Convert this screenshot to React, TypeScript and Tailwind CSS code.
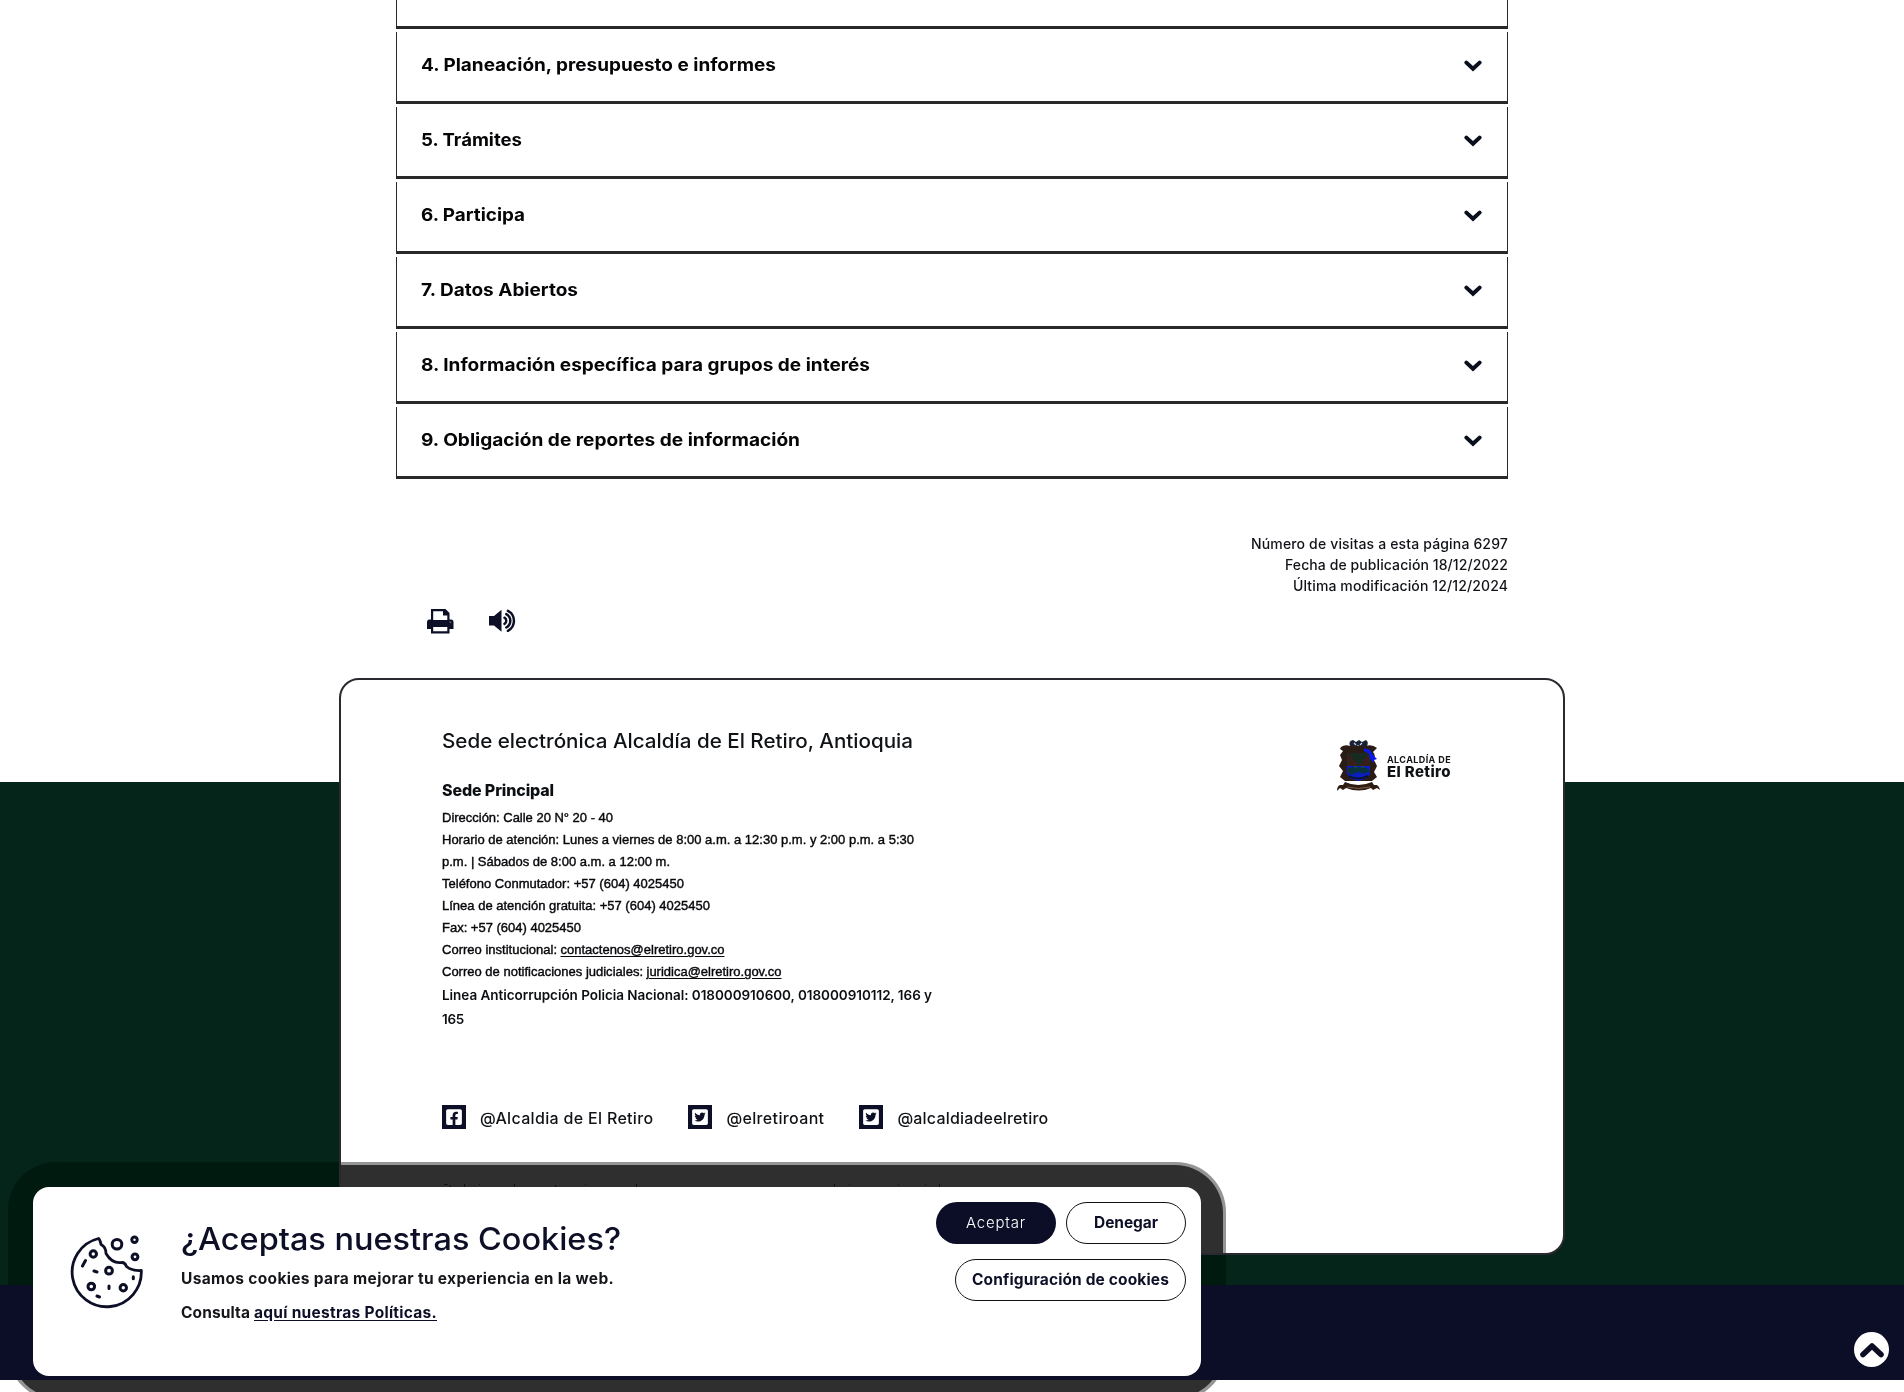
import { useLayoutEffect, useRef, type ReactNode } from "react";
import { FaFacebookSquare, FaTwitterSquare } from "react-icons/fa";

/** Single line of text fitted to a width by tracking, or by widening the glyphs when `stretch` is set. */
function Fit({ w, stretch = false, className = "", children }: { w: number; stretch?: boolean; className?: string; children: ReactNode }) {
  const ref = useRef<HTMLSpanElement>(null);
  useLayoutEffect(() => {
    const el = ref.current;
    if (!el) return;
    el.style.letterSpacing = "0px";
    el.style.transform = "none";
    const natural = el.getBoundingClientRect().width;
    if (stretch) {
      el.style.transform = `scaleX(${w / natural})`;
      return;
    }
    const count = (el.textContent ?? "").length;
    el.style.letterSpacing = `${(w - natural) / count}px`;
  }, [w, stretch]);
  return (
    <span ref={ref} className={`inline-block whitespace-nowrap ${stretch ? "origin-left" : ""} ${className}`}>
      {children}
    </span>
  );
}

const sections: [string, number][] = [
  ["4. Planeación, presupuesto e informes", 355],
  ["5. Trámites", 101],
  ["6. Participa", 104],
  ["7. Datos Abiertos", 157],
  ["8. Información específica para grupos de interés", 449],
  ["9. Obligación de reportes de información", 379],
];

const contact: [string, number, string?, number?][] = [
  ["Dirección: Calle 20 N° 20 - 40", 171],
  ["Horario de atención: Lunes a viernes de 8:00 a.m. a 12:30 p.m. y 2:00 p.m. a 5:30", 472],
  ["p.m. | Sábados de 8:00 a.m. a 12:00 m.", 228],
  ["Teléfono Conmutador: +57 (604) 4025450", 242],
  ["Línea de atención gratuita: +57 (604) 4025450", 268],
  ["Fax: +57 (604) 4025450", 139],
  ["Correo institucional:", 115, "contactenos@elretiro.gov.co", 164],
  ["Correo de notificaciones judiciales:", 201, "juridica@elretiro.gov.co", 135],
];

function Chevron() {
  return (
    <svg width="18" height="12" viewBox="0 0 18 12" fill="none" className="mt-[4px]">
      <path d="M2.4 2.6 9 8.8l6.600-6.200" stroke="#0a0f1d" strokeWidth="4" strokeLinecap="round" strokeLinejoin="miter" />
    </svg>
  );
}

function Printer() {
  return (
    <svg width="27" height="25" viewBox="0 0 27 25">
      <path
        fillRule="evenodd"
        fill="#0c0f26"
        d="M4 0h14.500L22.500 4v6.500h1.500q2.500 0 2.500 2.500v7h-4v4.500H4V20H0v-7q0-2.500 2.500-2.500H4ZM6.200 2.200V11h14.100V6.500h-4.300V2.200ZM6.200 18v4.300h14.100V18Z"
      />
      <circle cx="23.400" cy="13.300" r="1" fill="#55586f" />
    </svg>
  );
}

function Speaker() {
  return (
    <svg width="28" height="24" viewBox="0 0 28 24" fill="none" stroke="#0c0f26" strokeWidth="2.500" strokeLinecap="round">
      <path d="M0 7h5L12.500.800v22L5 16.500H0Z" fill="#0c0f26" stroke="none" />
      <path d="M15.500 8.700a3.600 3.600 0 0 1 0 6.200M17.300 5.100a7.600 7.600 0 0 1 0 13.400M18.900 1.800a11.300 11.300 0 0 1 0 20" />
    </svg>
  );
}

function Crest() {
  return (
    <svg width="43" height="53" viewBox="0 0 43 53">
      <path d="M13 7Q11 2 16 1l3 2 3-2 3 2 4-2q3 2 1 6l-3 3H16Z" fill="#1a2135" />
      <path d="M17 4l2 2M25 4l-2 2M21 6v2" stroke="#c5cfe0" strokeWidth="1.200" />
      <path
        d="M4 8q4-3 9-1h16q6-2 11 2l-4 4q3 3 1 8l3 6-3 6 3 5-5 4H8l-5-4 3-6-4-5 3-6-2-5 3-4-3-2Z"
        fill="#2a1b15"
      />
      <path d="M10 14h23v19q0 5-11.500 9Q10 38 10 33Z" fill="#22272b" />
      <path d="M11 14 22 28 32 15v13H11Z" fill="#382019" />
      <path d="M11 14h21L22 25Z" fill="#172b20" />
      <path d="M27 9l6 2 3 5 4 4-3 1v3l-4-4-1-5-5-3Z" fill="#0a18ee" />
      <path d="M10 27h23v7q0 5-11.500 8Q10 39 10 34Z" fill="#0b1ec4" />
      <path d="M11 29q11-3 21 1v4q-4-2-5 1l-6-2-7 3-3-3Z" fill="#09323e" />
      <path d="M12 37q9 5 19 0" stroke="#0b1430" strokeWidth="2" fill="none" />
      <path d="M17 28h3M24 28h3" stroke="#256" strokeWidth="1" />
      <path d="M0 52q0-5 3-6h3l2-3q13 6 27 0l2 3h3q3 2 3 5l-3-2-4 2-2-2q-12 5-25 0l-3 2-3-2Z" fill="#2f1d12" />
      <path d="M10 48q11 3 23 0" stroke="#8b735c" strokeWidth=".8" fill="none" />
    </svg>
  );
}

function Cookie() {
  return (
    <svg width="74" height="74" viewBox="0 0 74 74" fill="none" stroke="#0c0f26" strokeWidth="2.800" strokeLinecap="round" strokeLinejoin="round">
      <path d="M28.500 3.500A34.600 34.600 0 1 0 71.300 35.500Q62 36 56.500 31.500 55 27.500 52 27.500 42 29 36 18.500 36 12 31 9.500 30 4.500 28.500 3.500Z" />
      <g strokeWidth="3">
        <circle cx="47" cy="9.300" r="4.800" />
        <circle cx="64.500" cy="4.800" r="2.700" />
        <circle cx="65" cy="21.800" r="2.900" />
        <circle cx="23.300" cy="19" r="3.200" />
        <circle cx="39" cy="35.700" r="3.400" />
        <circle cx="21.300" cy="51.500" r="3.300" />
        <circle cx="53.300" cy="52.700" r="3.200" />
        <path d="M15.500 25.500 12.500 31M24 36l3 1M63.300 41.800v2M39 51v2.500M27 61l2.500 1" />
      </g>
    </svg>
  );
}

function Social({ children, name, w, className = "" }: { children: ReactNode; name: string; w: number; className?: string }) {
  return (
    <div className={`flex ${className}`}>
      <div className="flex h-6 w-6 items-center justify-center bg-[#0c0f26] text-white">{children}</div>
      <Fit w={w} className="ml-[14px] text-[16px] leading-[26px] font-medium text-[#101316]">{name}</Fit>
    </div>
  );
}

function Accordion() {
  return (
    <div className="mx-auto w-[1112px]">
      <div className="h-[29px] border-x border-b-[3px] border-[#29292b] bg-white" />
      {sections.map(([label, w]) => (
        <div key={label} className="mt-[3px] flex h-[72px] justify-between border-x border-b-[3px] border-[#29292b] bg-white pt-6 pr-[25px] pl-[24px]">
          <Fit w={w} stretch className="h-[18px] text-[17.500px] leading-[17px] font-bold text-[#050507]">{label}</Fit>
          <Chevron />
        </div>
      ))}
    </div>
  );
}

function FooterCard() {
  return (
    <div className="relative mx-auto flex h-[577px] w-[1226px] justify-between rounded-[20px] border-2 border-[#29292f] bg-white pl-[101px]">
      <div className="pt-[46px]">
        <h2 className="h-[30px] leading-[30px]"><Fit w={471} stretch className="text-[20px] font-[450] text-[#101316]">Sede electrónica Alcaldía de El Retiro, Antioquia</Fit></h2>
        <h3 className="mt-[22px] h-[24px] leading-[24px]"><Fit w={112} className="text-[16px] font-extrabold text-[#0c0f12]">Sede Principal</Fit></h3>
        <div className="mt-[5px] font-['Liberation_Sans',Arial,sans-serif] text-[13px] leading-[22px] text-[#08080c]">
          {contact.map(([label, w, link, lw]) => (
            <p key={label} className="flex h-[22px] [-webkit-text-stroke:0.4px_#08080c]">
              <Fit w={w}>{label}</Fit>
              {link && <Fit w={lw ?? 0} className="ml-[3.500px] underline underline-offset-2">{link}</Fit>}
            </p>
          ))}
        </div>
        <p className="flex flex-col text-[13.500px] leading-[24px] font-semibold text-[#0c0f12]">
          <Fit w={490} className="self-start">Linea Anticorrupción Policia Nacional: 018000910600, 018000910112, 166 y</Fit>
          <Fit w={22} className="self-start">165</Fit>
        </p>
        <div className="mt-[74px] flex h-6">
          <Social name="@Alcaldia de El Retiro" w={174}><FaFacebookSquare size={18} /></Social>
          <Social name="@elretiroant" w={98} className="ml-[35px]"><FaTwitterSquare size={18} /></Social>
          <Social name="@alcaldiadeelretiro" w={151} className="ml-[35px]"><FaTwitterSquare size={18} /></Social>
        </div>
        <p className="mt-[49px] text-[16px] leading-[24px]"><Fit w={500} className="text-[#101216]">Política de tratamiento de datos personales y política editorial</Fit></p>
      </div>
      <div className="mt-[59px] mr-[112px] flex h-[53px]">
        <Crest />
        <div className="ml-[7px] pt-[13px] text-[#101216]">
          <div className="h-[10px] leading-[10px]"><Fit w={64} className="text-[9px] font-bold">ALCALDÍA DE</Fit></div>
          <div className="mt-[2px] h-[14px] leading-[14px]"><Fit w={64} className="text-[15px] font-extrabold">El Retiro</Fit></div>
        </div>
      </div>
    </div>
  );
}

function CookieBanner() {
  return (
    <div className="absolute top-[1187px] left-[33px] flex h-[189px] w-[1168px] rounded-[16px] bg-white">
      <div className="mt-[48px] ml-[37px]"><Cookie /></div>
      <div className="ml-[37px] flex-1 pt-[32px] text-[#0c0f26]">
        <div className="h-[40px] leading-[40px]"><Fit w={440} stretch className="text-[31px] font-[450]">¿Aceptas nuestras Cookies?</Fit></div>
        <p className="mt-[7px] h-[24px] leading-[24px] text-[#14161a]"><Fit w={433} className="text-[15.500px] font-bold">Usamos cookies para mejorar tu experiencia en la web.</Fit></p>
        <p className="mt-[11px] flex h-[24px] text-[15.500px] leading-[24px] font-bold">
          <Fit w={69} className="text-[#14161a]">Consulta</Fit>
          <Fit w={183} className="ml-[4px] underline underline-offset-2">aquí nuestras Políticas.</Fit>
        </p>
      </div>
      <div className="mt-[15px] mr-[15px] grid h-[99px] grid-cols-[101px_10px_120px] content-start justify-end gap-y-[15px] text-[15.500px]">
        <button className="-ml-[19px] h-[42px] w-[120px] rounded-[21px] bg-[#0c0e27] text-white"><Fit w={60} className="text-[15px] font-light">Aceptar</Fit></button>
        <button className="col-start-3 h-[42px] w-[120px] rounded-[21px] border border-[#111218] font-bold text-[#0c0f26]"><Fit w={64}>Denegar</Fit></button>
        <button className="col-span-3 h-[42px] w-[231px] rounded-[21px] border border-[#111218] font-bold text-[#0c0f26]"><Fit w={197}>Configuración de cookies</Fit></button>
      </div>
    </div>
  );
}

export default function App() {
  return (
    <div className="relative isolate h-[1392px] w-[1904px] overflow-hidden bg-white font-['Inter',sans-serif]">
      {/* footer bands behind the card */}
      <div className="absolute inset-x-0 top-[782px] -z-10 h-[503px] overflow-hidden bg-[#05241a]">
        <div className="absolute top-[380px] left-[8px] h-[240px] w-[1218px] rounded-[48px] bg-[#011a0f]" />
      </div>
      <div className="absolute inset-x-0 top-[1285px] -z-10 h-[95px] bg-[#0c0e27]" />

      <Accordion />

      <div className="mx-auto mt-[54px] flex w-[1112px] flex-col items-end text-[14px] leading-[21px] font-medium text-[#111318]">
        <Fit w={257}>Número de visitas a esta página 6297</Fit>
        <Fit w={223}>Fecha de publicación 18/12/2022</Fit>
        <Fit w={215}>Última modificación 12/12/2024</Fit>
      </div>
      <div className="mx-auto mt-[13px] mb-[44px] flex h-[25px] w-[1112px] gap-[35px] pl-[31px]">
        <Printer />
        <Speaker />
      </div>

      <FooterCard />

      {/* banner shadow */}
      <div className="absolute top-[1162px] left-[8px] h-[239px] w-[1218px] rounded-[50px] bg-[#959595] mix-blend-darken" />
      <div className="absolute top-[1165px] left-[11px] h-[233px] w-[1212px] rounded-[48px] bg-[#2f2f2f] mix-blend-darken" />
      <CookieBanner />

      <div className="absolute top-[1332px] left-[1854px] flex h-[35px] w-[35px] items-center justify-center rounded-full bg-white">
        <svg width="26" height="18" viewBox="0 0 26 18" fill="none">
          <path d="M4 13.500 13 5l9 8.500" stroke="#0c0e27" strokeWidth="5.600" strokeLinecap="round" strokeLinejoin="round" />
        </svg>
      </div>
    </div>
  );
}
